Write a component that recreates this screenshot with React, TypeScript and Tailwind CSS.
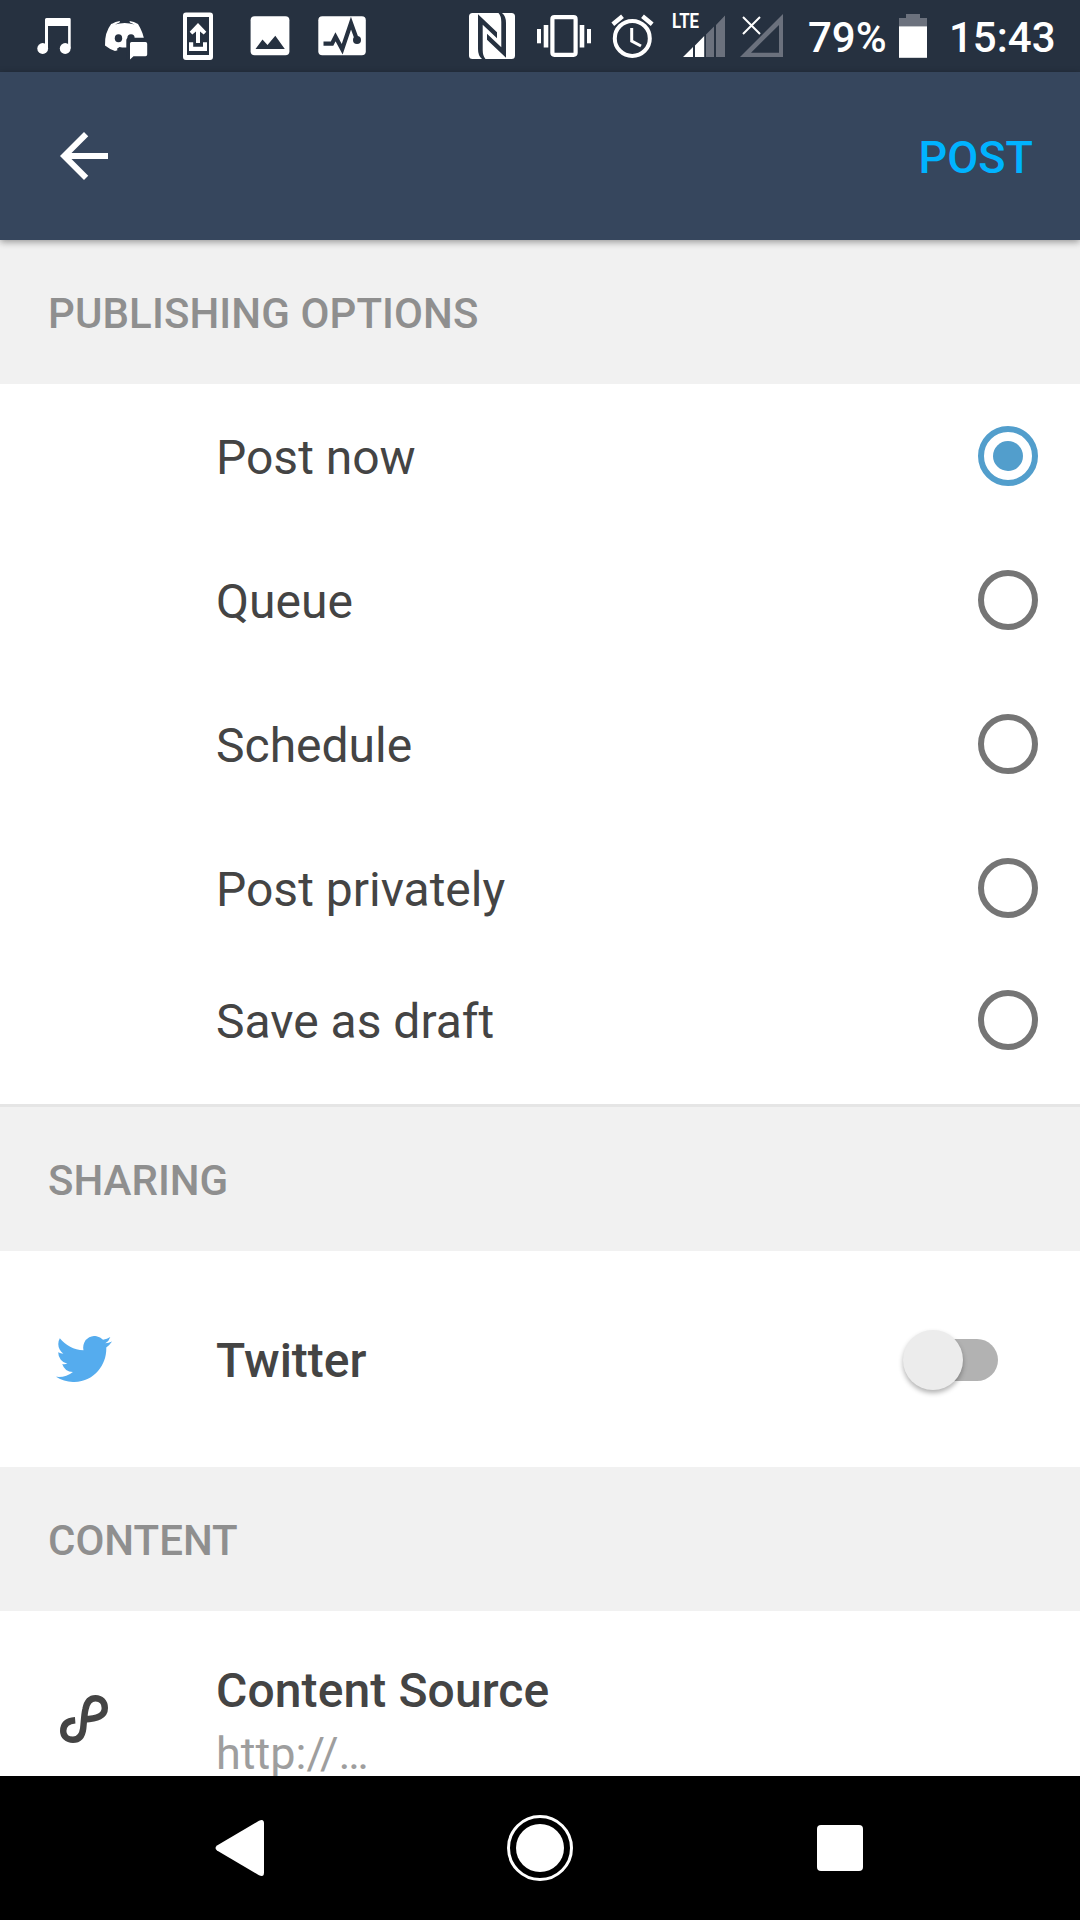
import React, { useState } from "react";

type GlyphProps = { x: number; w: number; children: React.ReactNode };

/* Status bar glyph: a 72px tall tile of the bar, starting at x. */
function Glyph({ x, w, children }: GlyphProps) {
  return (
    <svg width={w} height={72} viewBox={`${x} 0 ${w} 72`} className="shrink-0" fill="#fff">
      {children}
    </svg>
  );
}

const BAR = "#263140";
const DIM = "#6b717d";

function StatusBar() {
  return (
    <div className="flex h-[72px] shrink-0 items-center bg-[#263140] pl-6 text-[42px] font-medium leading-none text-white">
      <Glyph x={24} w={66}>
        <path d="M46.5 18h23q1.2 0 1.2 1.2v29.3h-2.6V26H48v22.5h-3V19.5q0-1.5 1.5-1.5z" />
        <circle cx={42.7} cy={48.5} r={5.4} />
        <circle cx={65.2} cy={48.5} r={5.4} />
      </Glyph>
      <Glyph x={90} w={75}>
        <path d="M111.500 24q4-2.300 8.500-3l-.5 1.500-4.500 2q9.700-3 19.500 0l-4.500-2-.5-1.500q4.500 .7 8.500 3 5.300 8.500 6.600 18v8.500L130 51l-3-3.500q-4 .3-7.500-.6l-2.500 1.800 .5 1.500-2.500.8q-5-1.500-10-5.500-.5-13 6.500-22z" />
        <ellipse cx={118.500} cy={38.300} rx={3.700} ry={4} fill={BAR} />
        <ellipse cx={131} cy={38.300} rx={3.700} ry={4} fill={BAR} />
        <path d="M126.300 40.500q0-2.700 2.700-2.700h20V62h-22.700z" fill={BAR} />
        <path d="M131.500 42h14q1.700 0 1.700 1.700v10.800q0 1.700-1.700 1.700h-12l-3.500 3.300V43.500q0-1.500 1.500-1.500z" />
      </Glyph>
      <Glyph x={165} w={65}>
        <path
          fillRule="evenodd"
          d="M186 12.500h24q3 0 3 3V57q0 3-3 3h-24q-3 0-3-3V15.500q0-3 3-3zM187 17v38h22V17z"
        />
        <path d="M198 23l8.300 8.800-2.600 2.600-3.700-2.900V43h-4V31.500l-3.700 2.900-2.600-2.600z" />
        <path d="M189 42.300h4.200v4.500H203v-4.500h4V51h-18z" />
      </Glyph>
      <Glyph x={230} w={74}>
        <rect x={250.600} y={16.300} width={38.800} height={39} rx={4} />
        <path d="M255.500 49l7-9.600 5 5.600 7.800-9.200 9.500 13.200z" fill={BAR} />
      </Glyph>
      <Glyph x={304} w={76}>
        <rect x={318.300} y={16.300} width={47.500} height={39} rx={4} />
        <path
          d="M323.500 43.700h8.500l3.500-7 6.700 12.500 8.800-26 6 16.500"
          fill="none"
          stroke={BAR}
          strokeWidth={4.200}
        />
        <circle cx={357} cy={40} r={4} fill={BAR} />
      </Glyph>
      <div className="w-[70px]" />
      <Glyph x={450} w={80}>
        <rect x={469} y={13} width={46} height={46} rx={3.500} />
        <g fill={BAR}>
          <path d="M478 14.300L497 32.300V38.300L482.700 24.700V50Q482.700 56 485.500 59H482Q478 56 478 49z" />
          <path d="M506 57.700L487 39.700V33.700L501.300 47.300V22Q501.300 16 498.500 13H502Q506 16 506 23z" />
        </g>
      </Glyph>
      <Glyph x={530} w={70}>
        <rect x={552.400} y={17.200} width={23.200} height={37.600} rx={2} fill="none" stroke="#fff" strokeWidth={4.200} />
        <rect x={543.700} y={25} width={4.600} height={22.500} />
        <rect x={537} y={29} width={4} height={14.300} />
        <rect x={579.700} y={25} width={4.600} height={22.500} />
        <rect x={587} y={29} width={4} height={14.300} />
      </Glyph>
      <Glyph x={600} w={65}>
        <circle cx={632.300} cy={38.400} r={17.500} fill="none" stroke="#fff" strokeWidth={4} />
        <path d="M631.700 28v13l9.300 5" fill="none" stroke="#fff" strokeWidth={3} />
        <path d="M612.800 24.300l9.700-8M652.200 24.300l-9.700-8" stroke="#fff" strokeWidth={4.400} />
      </Glyph>
      <Glyph x={665} w={70}>
        <text x={672} y={28} fontSize={21} fontWeight={700} textLength={27} lengthAdjust="spacingAndGlyphs">
          LTE
        </text>
        <path d="M683 57l10-10v10zM695 57V45.500l9.200-9.500v21z" />
        <path d="M706 57V34.500l8-8V57zM716 57V25l9-9.500V57z" fill={DIM} />
      </Glyph>
      <Glyph x={735} w={65}>
        <path fillRule="evenodd" d="M740 57l43-43v43zM751 52.700h28V25z" fill={DIM} />
        <path d="M743 17l17 17M760 17l-17 17" stroke="#fff" strokeWidth={2} />
      </Glyph>
      <span className="ml-2 w-[82px] pt-[3px]">79%</span>
      <Glyph x={890} w={50}>
        <path d="M899 26.300V18h7v-4h14v4h7v8.300z" fill={DIM} />
        <rect x={899} y={26.300} width={28} height={31.500} />
      </Glyph>
      <span className="ml-[9px] pt-[3px]">15:43</span>
    </div>
  );
}

function SectionTitle({ children }: { children: React.ReactNode }) {
  return (
    <h2 className="flex h-36 shrink-0 items-center bg-[#f1f1f1] pl-12 pt-[3px] text-[42px] font-medium leading-none text-[#8f8f8f]">
      {children}
    </h2>
  );
}

function Radio({ on }: { on: boolean }) {
  return on ? (
    <span className="flex size-[60px] items-center justify-center rounded-full border-6 border-[#529ecc]">
      <span className="size-[30px] rounded-full bg-[#529ecc]" />
    </span>
  ) : (
    <span className="size-[60px] rounded-full border-6 border-[#757575]" />
  );
}

const OPTIONS = ["Post now", "Queue", "Schedule", "Post privately", "Save as draft"];

export default function App() {
  const [selected, setSelected] = useState(0);
  return (
    <div className="flex h-[1920px] w-[1080px] flex-col overflow-hidden bg-white font-['Roboto',sans-serif] text-[#444]">
      <StatusBar />
      <header className="relative z-10 flex h-[168px] shrink-0 items-center justify-between bg-[#36465d] pl-12 pr-[47px] shadow-[0_2px_7px_rgba(0,0,0,0.38)]">
        <svg width={72} height={72} viewBox="0 0 24 24" fill="#fff">
          <path d="M20 11H7.830l5.590-5.590L12 4l-8 8 8 8 1.410-1.410L7.830 13H20v-2z" />
        </svg>
        <button className="pt-[3px] text-[45px] font-medium leading-none text-[#00b3ff]">POST</button>
      </header>

      <main className="flex min-h-0 flex-1 flex-col overflow-hidden">
        <SectionTitle>
          <span className="tracking-[0.1px]">PUBLISHING OPTIONS</span>
        </SectionTitle>
        <div className="shrink-0 border-b-3 border-[#e5e5e5] pb-6">
          {OPTIONS.map((label, i) => (
            <div
              key={label}
              onClick={() => setSelected(i)}
              className={`flex items-center justify-between pl-[216px] pr-[42px] ${i === 4 ? "h-[120px]" : "h-36"}`}
            >
              <span className="pt-[3px] text-[48px] leading-none">{label}</span>
              <Radio on={selected === i} />
            </div>
          ))}
        </div>

        <SectionTitle>SHARING</SectionTitle>
        <div className="flex h-[216px] shrink-0 items-center">
          <div className="flex w-[216px] pl-14">
            <svg width={56} height={46} viewBox="0 2.250 24 19.500" preserveAspectRatio="none" fill="#55acee">
              <path d="M23.953 4.570a10 10 0 01-2.825.775 4.958 4.958 0 002.163-2.723c-.951.555-2.005.959-3.127 1.184a4.920 4.920 0 00-8.384 4.482C7.690 8.095 4.067 6.130 1.640 3.162a4.822 4.822 0 00-.666 2.475c0 1.710.870 3.213 2.188 4.096a4.904 4.904 0 01-2.228-.616v.060a4.923 4.923 0 003.946 4.827 4.996 4.996 0 01-2.212.085 4.936 4.936 0 004.604 3.417 9.867 9.867 0 01-6.102 2.105c-.390 0-.779-.023-1.170-.067a13.995 13.995 0 007.557 2.209c9.053 0 13.998-7.496 13.998-13.985 0-.210 0-.420-.015-.630A9.935 9.935 0 0024 4.590z" />
            </svg>
          </div>
          <span className="flex-1 pt-[3px] text-[48px] font-medium leading-none">Twitter</span>
          <div className="mr-[82px] mt-[2px] flex h-[42px] w-[84px] items-center rounded-full bg-[#b2b2b2]">
            <span className="-ml-[11.500px] size-[60px] shrink-0 rounded-full bg-[#ececec] shadow-[0_3px_5px_rgba(0,0,0,0.3)]" />
          </div>
        </div>

        <SectionTitle>CONTENT</SectionTitle>
        <div className="flex h-[216px] shrink-0 items-center">
          <div className="flex w-[216px] pl-[60px]">
            <svg width={48} height={48} viewBox="0 0 48 48" fill="none" stroke="#444" strokeWidth={6.400}>
              <path d="M15.200 25.200C7.500 25.800 3.200 29.500 3.200 36c0 5 3.800 8.800 9.800 8.800 6.500 0 9.300-4.300 10.200-11.300.8-7 .8-13 2.300-19.500 1.500-7.500 4.500-10.800 10-10.800 5.300 0 9.300 3.800 9.300 9.800 0 8-7 10.500-20.800 11.500" />
            </svg>
          </div>
          <div className="flex flex-col pt-3">
            <span className="text-[48px] font-medium leading-[56px] tracking-[0.1px]">Content Source</span>
            <span className="pt-px text-[45px] leading-[68px] text-[#9e9e9e]">http://…</span>
          </div>
        </div>
      </main>

      <nav className="flex h-36 shrink-0 items-center bg-black pl-[215px]">
        <svg width={50} height={58} viewBox="0 0 50 58" fill="#fff">
          <path d="M2 26.500L44 1.800q5-2.500 5 2.700v49q0 5.200-5 2.700L2 31.500q-3-2.500 0-5z" />
        </svg>
        <svg className="ml-[242px]" width={66} height={66} viewBox="0 0 66 66" fill="#fff">
          <circle cx={33} cy={33} r={31.500} fill="none" stroke="#fff" strokeWidth={3} />
          <circle cx={33} cy={33} r={24} />
        </svg>
        <span className="ml-[244px] size-[46px] rounded-[4px] bg-white" />
      </nav>
    </div>
  );
}
